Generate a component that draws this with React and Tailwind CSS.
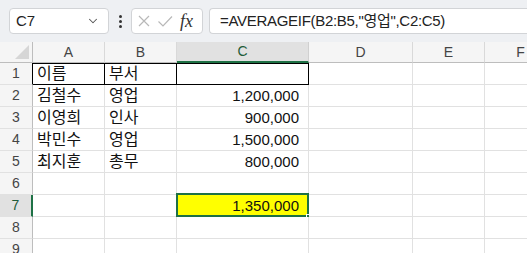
import { ChevronDown } from "lucide-react";

const cols = [
  { key: "A", w: "w-[72px]" },
  { key: "B", w: "w-[72px]" },
  { key: "C", w: "w-[132px]" },
  { key: "D", w: "w-[104px]" },
  { key: "E", w: "w-[72px]" },
  { key: "F", w: "w-[72px]" },
];

const rows = [
  ["이름", "부서", ""],
  ["김철수", "영업", "1,200,000"],
  ["이영희", "인사", "900,000"],
  ["박민수", "영업", "1,500,000"],
  ["최지훈", "총무", "800,000"],
  ["", "", ""],
  ["", "", "1,350,000"],
  ["", "", ""],
  ["", "", ""],
];

const font = "font-['Liberation_Sans','Noto_Sans_CJK_KR',sans-serif]";

function Cell({ r, c, value }) {
  const isTable = r === 0 && c < 3;
  const selected = r === 6 && c === 2;
  const numeric = c === 2;
  return (
    <div
      className={`${cols[c].w} h-[22px] shrink-0 border-r border-b flex items-center relative ${
        isTable ? "border-black shadow-[inset_0_1px_0_#000]" : "border-[#e1e1e1]"
      } ${numeric ? "justify-end pr-[9px]" : "pl-[4px]"} ${selected ? "bg-[#ffff00]" : "bg-white"}`}
    >
      <span className={`${numeric ? "text-[15px]" : "text-[16px]"} text-[#111] leading-none`}>{value}</span>
      {selected && (
        <>
          <div className="absolute -left-px -top-[2px] -right-px -bottom-px border-2 border-[#1e7145] pointer-events-none" />
          <div className="absolute -right-[4px] -bottom-[4px] w-[6px] h-[6px] bg-[#1e7145] border border-white" />
        </>
      )}
    </div>
  );
}

export default function App() {
  return (
    <div className={`w-[527px] h-[253px] overflow-hidden bg-white ${font}`}>
      {/* Formula bar */}
      <div className="h-[42px] bg-[#eef0f3] flex items-start pt-[8px] pl-[9px]">
        <div className="w-[100px] h-[26px] bg-white border border-[#d2d4d7] rounded-[4px] flex items-center justify-between pl-[6px] pr-[8px]">
          <span className="text-[15px] text-[#222]">C7</span>
          <ChevronDown size={14} strokeWidth={1.8} className="text-[#555]" />
        </div>
        <div className="w-[22px] h-[26px] flex flex-col items-center justify-center gap-[2px]">
          <span className="w-[3px] h-[3px] rounded-full bg-[#333]" />
          <span className="w-[3px] h-[3px] rounded-full bg-[#333]" />
          <span className="w-[3px] h-[3px] rounded-full bg-[#333]" />
        </div>
        <div className="w-[72px] h-[26px] bg-white border border-[#d2d4d7] rounded-[4px] flex items-center pl-[5px] gap-[6px]">
          <svg width="14" height="14" viewBox="0 0 14 14" className="text-[#b8b8b8]">
            <path d="M2 2 L12 12 M12 2 L2 12" stroke="currentColor" strokeWidth="1.2" fill="none" />
          </svg>
          <svg width="16" height="14" viewBox="0 0 16 14" className="text-[#b8b8b8]">
            <path d="M1.5 7.5 L6 12 L15 2.5" stroke="currentColor" strokeWidth="1.2" fill="none" />
          </svg>
          <span className="font-['Liberation_Serif',serif] italic text-[18px] text-[#333] leading-none ml-[1px]">fx</span>
        </div>
        <div className="ml-[6px] flex-1 h-[26px] bg-white border border-[#d2d4d7] border-r-0 rounded-l-[4px] flex items-center pl-[10px]">
          <span className="text-[15px] tracking-[-0.3px] text-[#222] whitespace-nowrap">=AVERAGEIF(B2:B5,"영업",C2:C5)</span>
        </div>
      </div>

      {/* Column headers */}
      <div className="flex h-[21px]">
        <div className="w-[33px] shrink-0 bg-[#f5f5f5] border-r border-b border-[#bdbdbd] flex items-end justify-end p-[3px]">
          <svg width="14" height="14" viewBox="0 0 14 14">
            <path d="M14 0 L14 14 L0 14 Z" fill="#d6d6d6" />
          </svg>
        </div>
        {cols.map((col) => (
          <div
            key={col.key}
            className={`${col.w} shrink-0 border-r flex items-center justify-center text-[14px] ${
              col.key === "C"
                ? "bg-[#e1e1e1] border-b-2 border-b-[#1e7145] border-r-[#d0d0d0] text-[#1e5c3a]"
                : "bg-[#f5f5f5] border-b border-b-[#bdbdbd] border-r-[#d9d9d9] text-[#444]"
            }`}
          >
            {col.key}
          </div>
        ))}
      </div>

      {/* Rows */}
      {rows.map((row, r) => (
        <div key={r} className="flex">
          <div
            className={`w-[33px] h-[22px] shrink-0 border-b border-[#e1e1e1] flex items-center justify-center text-[14px] ${
              r === 6
                ? "bg-[#e1e1e1] border-r-2 border-r-[#1e7145] text-[#1e5c3a]"
                : `bg-[#f5f5f5] border-r ${r === 0 ? "border-r-black" : "border-r-[#bdbdbd]"} text-[#444]`
            }`}
          >
            {r + 1}
          </div>
          {cols.map((col, c) => (
            <Cell key={col.key} r={r} c={c} value={row[c] || ""} />
          ))}
        </div>
      ))}
    </div>
  );
}
